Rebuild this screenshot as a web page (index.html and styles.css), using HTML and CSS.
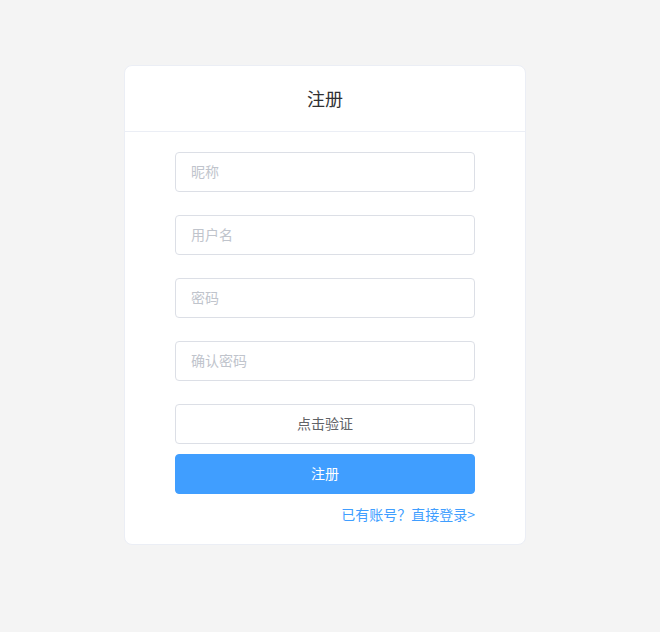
FILE: index.html
```html
<!DOCTYPE html>
<html lang="zh-CN">
<head>
    <meta charset="UTF-8">
    <meta name="viewport" content="width=device-width, initial-scale=1.0">
    <title>注册</title>
    <link rel="stylesheet" href="styles.css">
</head>
<body>
    <div class="card">
        <div class="card-header">注册</div>
        <form class="card-body">
            <div class="form-item"><input class="input" type="text" placeholder="昵称"></div>
            <div class="form-item"><input class="input" type="text" placeholder="用户名"></div>
            <div class="form-item"><input class="input" type="password" placeholder="密码"></div>
            <div class="form-item"><input class="input" type="password" placeholder="确认密码"></div>
            <button type="button" class="btn">点击验证</button>
            <button type="button" class="btn btn-primary">注册</button>
            <div class="login-link"><a href="#">已有账号？直接登录&gt;</a></div>
        </form>
    </div>
</body>
</html>
```

FILE: styles.css
```css
body {
    margin: 0;
    background-color: #f4f4f4;
    font-family: "Noto Sans CJK SC", "Noto Sans", sans-serif;
    min-height: 632px;
    padding-top: 65px;
    box-sizing: border-box;
}

.card {
    width: 402px;
    margin-left: 124px;
    background: #fff;
    border: 1px solid #ebeef5;
    border-radius: 8px;
    box-sizing: border-box;
    overflow: hidden;
}

.card-header {
    height: 65px;
    line-height: 64px;
    text-align: center;
    font-size: 18px;
    color: #303133;
    border-bottom: 1px solid #ebeef5;
}

.card-body {
    width: 300px;
    margin: 0 auto;
    padding: 20px 0 20px;
}

.form-item {
    margin-bottom: 23px;
}

.input {
    display: block;
    width: 100%;
    height: 40px;
    box-sizing: border-box;
    padding: 0 15px 2px;
    border: 1px solid #dcdfe6;
    border-radius: 4px;
    font-family: inherit;
    font-size: 14px;
    color: #606266;
    outline: none;
}

.input::placeholder {
    color: #c0c4cc;
}

.btn {
    display: block;
    width: 100%;
    height: 40px;
    padding: 0 0 2px;
    border: 1px solid #dcdfe6;
    border-radius: 4px;
    background: #fff;
    color: #606266;
    font-family: inherit;
    font-size: 14px;
    cursor: pointer;
}

.btn-primary {
    margin-top: 10px;
    background: #409eff;
    border-color: #409eff;
    color: #fff;
}

.login-link {
    text-align: right;
    margin-top: 10px;
    font-size: 14px;
    line-height: 20px;
}

.login-link a {
    color: #409eff;
    text-decoration: none;
}
```
